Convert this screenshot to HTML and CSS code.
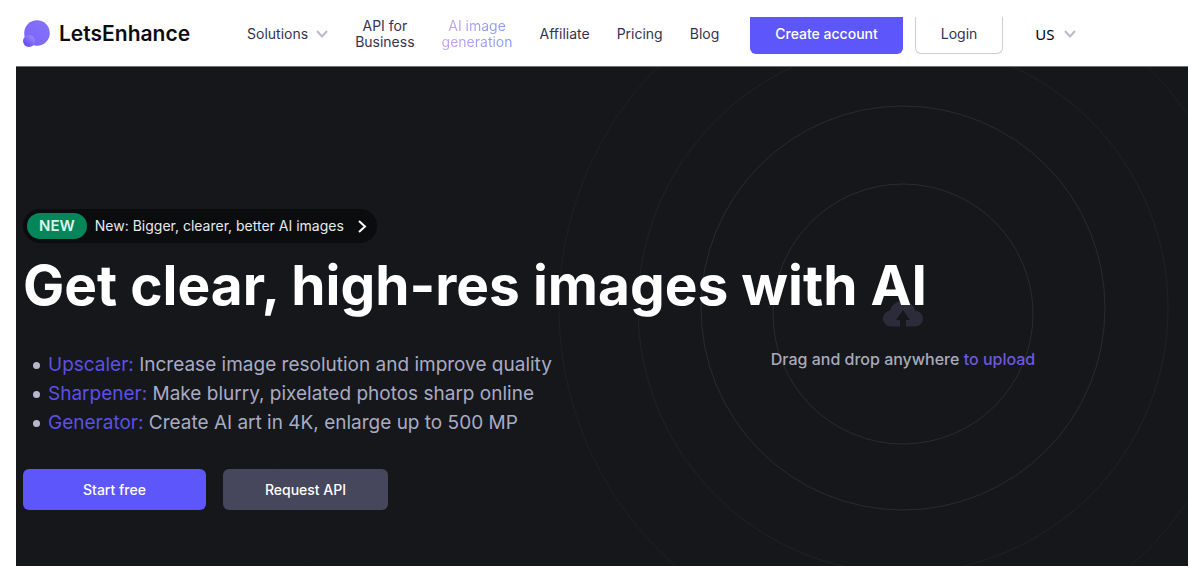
FILE: index.html
```
<!DOCTYPE html>
<html lang="en">
<head>
  <meta charset="UTF-8">
  <meta name="viewport" content="width=device-width, initial-scale=1.0">
  <title>LetsEnhance</title>
  <link rel="stylesheet" href="styles.css">
</head>
<body>

  <!-- Header -->
  <header class="site-header">
    <a class="logo" href="#">
      <svg width="27" height="28" viewBox="0 0 27 28" aria-hidden="true">
        <defs>
          <linearGradient id="logo-big" x1="0" y1="1" x2="1" y2="0">
            <stop offset="0" stop-color="#7a62fb"/>
            <stop offset="1" stop-color="#8674fa"/>
          </linearGradient>
          <linearGradient id="logo-small" x1="0" y1="1" x2="1" y2="0">
            <stop offset="0" stop-color="#5a3cf2"/>
            <stop offset="1" stop-color="#a294ff"/>
          </linearGradient>
        </defs>
        <circle cx="14" cy="13" r="12.8" fill="url(#logo-big)"/>
        <circle cx="6" cy="21" r="6" fill="url(#logo-small)"/>
      </svg>
      <span>LetsEnhance</span>
    </a>
    <nav class="main-nav">
      <button class="nav-menu" type="button">
        Solutions
        <svg width="12" height="8" viewBox="0 0 12 8" aria-hidden="true"><path d="M1 1l5 5.5L11 1"/></svg>
      </button>
      <a href="#">API for<br>Business</a>
      <a class="nav-gradient" href="#">AI image<br>generation</a>
      <a href="#">Affiliate</a>
      <a href="#">Pricing</a>
      <a href="#">Blog</a>
    </nav>
    <div class="account">
      <button class="btn-create" type="button">Create account</button>
      <button class="btn-login" type="button">Login</button>
    </div>
    <div class="language">
      <select aria-label="Language">
        <option>US</option>
      </select>
      <svg width="12" height="8" viewBox="0 0 12 8" aria-hidden="true"><path d="M1 1l5 5.5L11 1"/></svg>
    </div>
  </header>

  <!-- Hero -->
  <main class="hero">
    <section class="intro">
      <a class="news" href="#">
        <span class="news-tag">NEW</span>
        <span>New: Bigger, clearer, better AI images</span>
        <svg width="9" height="13" viewBox="0 0 9 13" aria-hidden="true"><path d="M1 1l6 5.5L1 12"/></svg>
      </a>
      <h1>Get clear, high-res images with AI</h1>
      <ul class="features">
        <li><a href="#">Upscaler:</a> Increase image resolution and improve quality</li>
        <li><a href="#">Sharpener:</a> Make blurry, pixelated photos sharp online</li>
        <li><a href="#">Generator:</a> Create AI art in 4K, enlarge up to 500 MP</li>
      </ul>
      <div class="actions">
        <button class="btn-start" type="button">Start free</button>
        <button class="btn-api" type="button">Request API</button>
      </div>
    </section>

    <section class="drop-area">
      <svg class="rings" width="1300" height="1300" viewBox="-650 -650 1300 1300" aria-hidden="true">
        <circle cy="-3" r="130" stroke="#2a2b2e"/>
        <circle cy="-9" r="202" stroke="#2a2b2e"/>
        <circle cy="-9" r="265" stroke="#202225"/>
        <circle cy="-9" r="344" stroke="#1e2023"/>
        <circle cy="-9" r="471" stroke="#17191c"/>
        <circle cy="-9" r="643" stroke="#17191c"/>
      </svg>
      <svg class="cloud" width="40" height="26" viewBox="0 0 40 26" aria-hidden="true">
        <path d="M8.500 25.500C3.800 25.500 0 22 0 17.500c0-4.200 3-7.300 7-8C8.800 3.600 13.600 0 19.500 0c6.400 0 11.300 4 12.700 9.700 4.400.3 7.800 3.500 7.800 7.800 0 4.600-3.600 8-8.500 8H23v-6.500h4L20 9l-7 10h4v6.500z"/>
      </svg>
      <p>Drag and drop anywhere <a href="#">to upload</a></p>
    </section>
  </main>

</body>
</html>
```

FILE: styles.css
```
* {
  box-sizing: border-box;
}
body {
  display: flex;
  flex-direction: column;
  min-height: 100vh;
  margin: 0;
  padding: 17px 14px 10px 16px;
  font-family: Inter, "Liberation Sans", sans-serif;
  background: #fff;
  color: #35334f;
}
a {
  color: inherit;
  text-decoration: none;
}
button {
  border: none;
  font: inherit;
  cursor: pointer;
}

/* Header */
.site-header {
  display: flex;
  align-items: flex-start;
  padding: 0 7px 12px;
  border-bottom: 1px solid #6c7472;
  font-size: 14px;
  line-height: 16px;
}
.logo {
  display: flex;
  align-items: center;
  gap: 9px;
  height: 34px;
  margin-right: 57px;
  font-size: 21px;
  font-weight: 600;
  color: #0c0c10;
}
.main-nav {
  display: flex;
  align-items: center;
  gap: 27px;
  height: 34px;
  margin-right: 31px;
  text-align: center;
}
.nav-menu {
  display: flex;
  align-items: center;
  gap: 8px;
  padding: 0;
  background: none;
  color: inherit;
}
.nav-menu svg, .language svg {
  fill: none;
  stroke: #b9bacd;
  stroke-width: 2;
}
.nav-gradient {
  background: linear-gradient(to right, #c8a4ee, #7b9df5);
  -webkit-background-clip: text;
  background-clip: text;
  color: transparent;
}
.account {
  display: flex;
  gap: 12px;
}
.btn-create, .btn-login {
  height: 37px;
  padding: 0 25px 3px;
  border-radius: 0 0 6px 6px;
}
.btn-create {
  background: #5c56fb;
  font-weight: 500;
  color: #fff;
}
.btn-login {
  border: 1px solid #cdced9;
  border-top: none;
  background: #fff;
  color: #35334f;
}
.language {
  display: flex;
  align-items: center;
  gap: 9px;
  height: 34px;
  margin-left: 32px;
}
.language select {
  appearance: none;
  padding: 0;
  border: none;
  background: none;
  font-family: "Noto Sans", sans-serif;
  font-size: 15px;
  color: #000;
}

/* Hero */
.hero {
  flex: 1;
  display: grid;
  grid-template-columns: 1fr 1fr;
  gap: 32px;
  overflow: hidden;
  background: #15171a;
}
.intro {
  position: relative;
  z-index: 1;
  min-width: 0;
  padding: 142px 0 56px 7px;
}
.news {
  display: inline-flex;
  align-items: center;
  gap: 8px;
  height: 34px;
  padding: 0 10px 0 4px;
  border-radius: 17px;
  background: #0b0c0e;
  font-size: 14px;
  line-height: 20px;
  color: #e8e9ee;
}
.news-tag {
  padding: 0 12px;
  border-radius: 13px;
  background: #05865a;
  font-size: 15px;
  font-weight: 600;
  line-height: 26px;
  color: #d9f5e8;
}
.news svg {
  margin-left: 6px;
  fill: none;
  stroke: #fff;
  stroke-width: 2;
}
h1 {
  margin: 8px 0 31px;
  font-size: 55px;
  font-weight: 700;
  line-height: 68px;
  white-space: nowrap;
  color: #fff;
}
.features {
  margin: 0 0 32px;
  padding-left: 10px;
  font-size: 19px;
  line-height: 29px;
  list-style: none;
  white-space: nowrap;
  color: #a9abc4;
}
.features li::before {
  content: "";
  display: inline-block;
  width: 7px;
  height: 7px;
  margin-right: 8px;
  border-radius: 50%;
  background: #b6b8cf;
  vertical-align: middle;
}
.features a {
  color: #5c50e6;
}
.actions {
  display: flex;
  gap: 17px;
}
.btn-start, .btn-api {
  height: 41px;
  border-radius: 6px;
  font-size: 14px;
  font-weight: 500;
  color: #fff;
}
.btn-start {
  padding: 0 60px;
  background: #5c56fb;
}
.btn-api {
  padding: 0 42px;
  background: #46465c;
}

/* Drop area */
.drop-area {
  position: relative;
  display: flex;
  flex-direction: column;
  align-items: center;
  justify-content: center;
  gap: 22px;
  padding-top: 36px;
}
.rings {
  position: absolute;
  top: 50%;
  left: 50%;
  transform: translate(-50%, -50%);
  fill: none;
}
.cloud {
  fill: #2c2b3a;
}
.drop-area p {
  position: relative;
  margin: 0;
  font-size: 16px;
  font-weight: 500;
  line-height: 20px;
  color: #a9abba;
}
.drop-area a {
  color: #6c59e0;
}
```
